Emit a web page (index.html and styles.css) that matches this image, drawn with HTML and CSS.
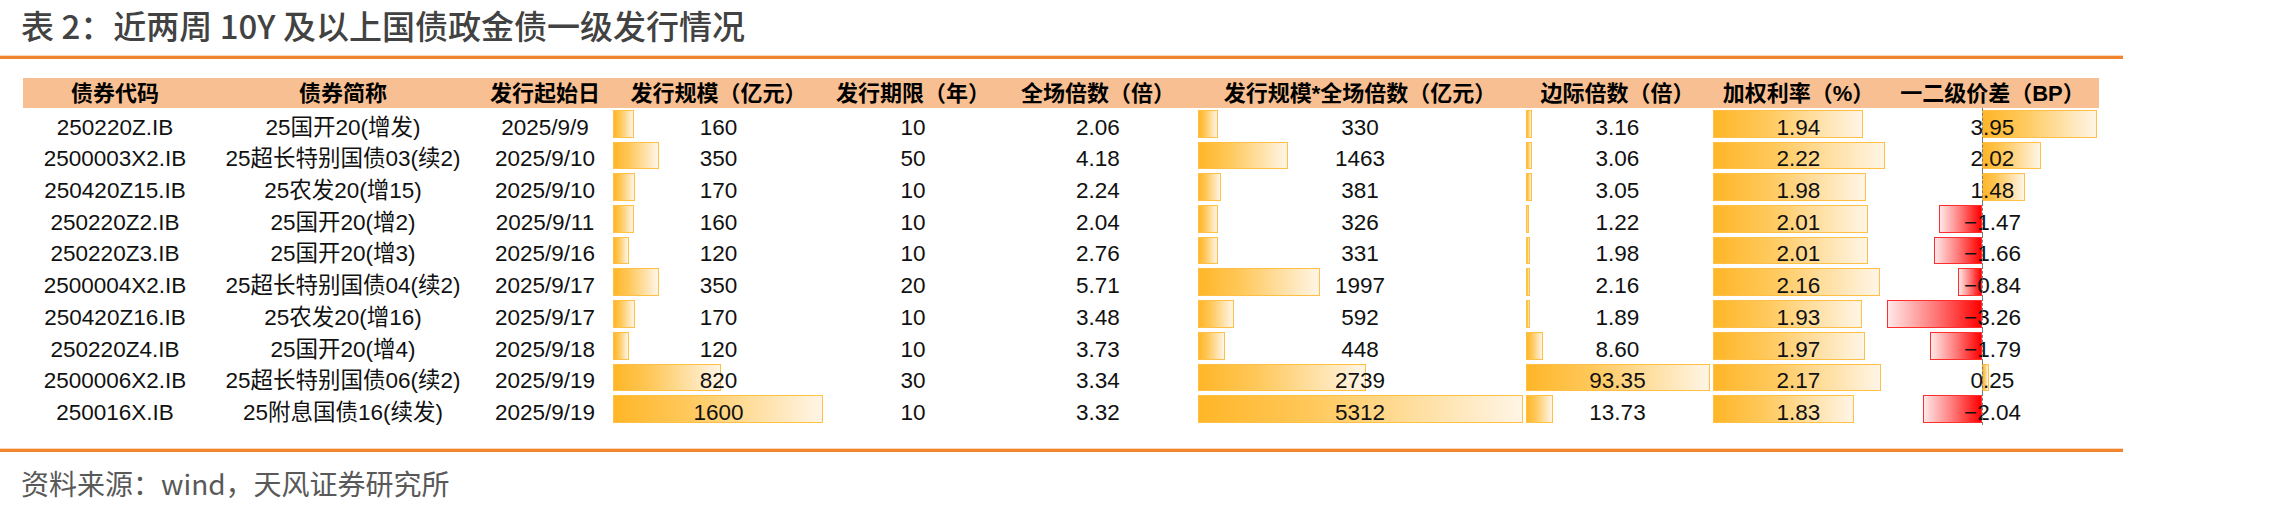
FILE: index.html
```html
<!DOCTYPE html>
<html lang="zh-CN">
<head>
<meta charset="utf-8">
<title>近两周 10Y 及以上国债政金债一级发行情况</title>
<link rel="stylesheet" href="styles.css">
</head>
<body>
<div class="page">
  <h1 class="title">表 2：近两周 10Y 及以上国债政金债一级发行情况</h1>
  <div class="rule"></div>

  <div class="table">
    <div class="row head">
      <div class="cell">债券代码</div>
      <div class="cell">债券简称</div>
      <div class="cell">发行起始日</div>
      <div class="cell">发行规模（亿元）</div>
      <div class="cell">发行期限（年）</div>
      <div class="cell">全场倍数（倍）</div>
      <div class="cell">发行规模*全场倍数（亿元）</div>
      <div class="cell">边际倍数（倍）</div>
      <div class="cell">加权利率（%）</div>
      <div class="cell">一二级价差（BP）</div>
    </div>

    <div class="row">
      <div class="cell">250220Z.IB</div>
      <div class="cell">25国开20(增发)</div>
      <div class="cell">2025/9/9</div>
      <div class="cell bar"><i class="fill" style="width:21px"></i><span>160</span></div>
      <div class="cell">10</div>
      <div class="cell">2.06</div>
      <div class="cell bar"><i class="fill" style="width:20.2px"></i><span>330</span></div>
      <div class="cell bar"><i class="fill" style="width:6.2px"></i><span>3.16</span></div>
      <div class="cell bar"><i class="fill" style="width:149.9px"></i><span>1.94</span></div>
      <div class="cell diverge"><i class="axis"></i><i class="fill pos" style="width:115px"></i><span>3.95</span></div>
    </div>

    <div class="row">
      <div class="cell">2500003X2.IB</div>
      <div class="cell">25超长特别国债03(续2)</div>
      <div class="cell">2025/9/10</div>
      <div class="cell bar"><i class="fill" style="width:45.9px"></i><span>350</span></div>
      <div class="cell">50</div>
      <div class="cell">4.18</div>
      <div class="cell bar"><i class="fill" style="width:89.5px"></i><span>1463</span></div>
      <div class="cell bar"><i class="fill" style="width:6px"></i><span>3.06</span></div>
      <div class="cell bar"><i class="fill" style="width:171.5px"></i><span>2.22</span></div>
      <div class="cell diverge"><i class="axis"></i><i class="fill pos" style="width:58.8px"></i><span>2.02</span></div>
    </div>

    <div class="row">
      <div class="cell">250420Z15.IB</div>
      <div class="cell">25农发20(增15)</div>
      <div class="cell">2025/9/10</div>
      <div class="cell bar"><i class="fill" style="width:22.3px"></i><span>170</span></div>
      <div class="cell">10</div>
      <div class="cell">2.24</div>
      <div class="cell bar"><i class="fill" style="width:23.3px"></i><span>381</span></div>
      <div class="cell bar"><i class="fill" style="width:6px"></i><span>3.05</span></div>
      <div class="cell bar"><i class="fill" style="width:153px"></i><span>1.98</span></div>
      <div class="cell diverge"><i class="axis"></i><i class="fill pos" style="width:43.1px"></i><span>1.48</span></div>
    </div>

    <div class="row">
      <div class="cell">250220Z2.IB</div>
      <div class="cell">25国开20(增2)</div>
      <div class="cell">2025/9/11</div>
      <div class="cell bar"><i class="fill" style="width:21px"></i><span>160</span></div>
      <div class="cell">10</div>
      <div class="cell">2.04</div>
      <div class="cell bar"><i class="fill" style="width:19.9px"></i><span>326</span></div>
      <div class="cell bar"><i class="fill" style="width:2.6px"></i><span>1.22</span></div>
      <div class="cell bar"><i class="fill" style="width:155.3px"></i><span>2.01</span></div>
      <div class="cell diverge"><i class="axis"></i><i class="fill neg" style="width:42.8px"></i><span>−1.47</span></div>
    </div>

    <div class="row">
      <div class="cell">250220Z3.IB</div>
      <div class="cell">25国开20(增3)</div>
      <div class="cell">2025/9/16</div>
      <div class="cell bar"><i class="fill" style="width:15.75px"></i><span>120</span></div>
      <div class="cell">10</div>
      <div class="cell">2.76</div>
      <div class="cell bar"><i class="fill" style="width:20.3px"></i><span>331</span></div>
      <div class="cell bar"><i class="fill" style="width:3.9px"></i><span>1.98</span></div>
      <div class="cell bar"><i class="fill" style="width:155.3px"></i><span>2.01</span></div>
      <div class="cell diverge"><i class="axis"></i><i class="fill neg" style="width:48.3px"></i><span>−1.66</span></div>
    </div>

    <div class="row">
      <div class="cell">2500004X2.IB</div>
      <div class="cell">25超长特别国债04(续2)</div>
      <div class="cell">2025/9/17</div>
      <div class="cell bar"><i class="fill" style="width:45.9px"></i><span>350</span></div>
      <div class="cell">20</div>
      <div class="cell">5.71</div>
      <div class="cell bar"><i class="fill" style="width:122.2px"></i><span>1997</span></div>
      <div class="cell bar"><i class="fill" style="width:4.3px"></i><span>2.16</span></div>
      <div class="cell bar"><i class="fill" style="width:166.9px"></i><span>2.16</span></div>
      <div class="cell diverge"><i class="axis"></i><i class="fill neg" style="width:24.5px"></i><span>−0.84</span></div>
    </div>

    <div class="row">
      <div class="cell">250420Z16.IB</div>
      <div class="cell">25农发20(增16)</div>
      <div class="cell">2025/9/17</div>
      <div class="cell bar"><i class="fill" style="width:22.3px"></i><span>170</span></div>
      <div class="cell">10</div>
      <div class="cell">3.48</div>
      <div class="cell bar"><i class="fill" style="width:36.2px"></i><span>592</span></div>
      <div class="cell bar"><i class="fill" style="width:3.7px"></i><span>1.89</span></div>
      <div class="cell bar"><i class="fill" style="width:149.1px"></i><span>1.93</span></div>
      <div class="cell diverge"><i class="axis"></i><i class="fill neg" style="width:94.9px"></i><span>−3.26</span></div>
    </div>

    <div class="row">
      <div class="cell">250220Z4.IB</div>
      <div class="cell">25国开20(增4)</div>
      <div class="cell">2025/9/18</div>
      <div class="cell bar"><i class="fill" style="width:15.75px"></i><span>120</span></div>
      <div class="cell">10</div>
      <div class="cell">3.73</div>
      <div class="cell bar"><i class="fill" style="width:27.4px"></i><span>448</span></div>
      <div class="cell bar"><i class="fill" style="width:17px"></i><span>8.60</span></div>
      <div class="cell bar"><i class="fill" style="width:152.2px"></i><span>1.97</span></div>
      <div class="cell diverge"><i class="axis"></i><i class="fill neg" style="width:52.1px"></i><span>−1.79</span></div>
    </div>

    <div class="row">
      <div class="cell">2500006X2.IB</div>
      <div class="cell">25超长特别国债06(续2)</div>
      <div class="cell">2025/9/19</div>
      <div class="cell bar"><i class="fill" style="width:107.6px"></i><span>820</span></div>
      <div class="cell">30</div>
      <div class="cell">3.34</div>
      <div class="cell bar"><i class="fill" style="width:167.6px"></i><span>2739</span></div>
      <div class="cell bar"><i class="fill" style="width:184px"></i><span>93.35</span></div>
      <div class="cell bar"><i class="fill" style="width:167.6px"></i><span>2.17</span></div>
      <div class="cell diverge"><i class="axis"></i><i class="fill pos" style="width:7.3px"></i><span>0.25</span></div>
    </div>

    <div class="row">
      <div class="cell">250016X.IB</div>
      <div class="cell">25附息国债16(续发)</div>
      <div class="cell">2025/9/19</div>
      <div class="cell bar"><i class="fill" style="width:210px"></i><span>1600</span></div>
      <div class="cell">10</div>
      <div class="cell">3.32</div>
      <div class="cell bar"><i class="fill" style="width:325px"></i><span>5312</span></div>
      <div class="cell bar"><i class="fill" style="width:27.1px"></i><span>13.73</span></div>
      <div class="cell bar"><i class="fill" style="width:141.4px"></i><span>1.83</span></div>
      <div class="cell diverge"><i class="axis"></i><i class="fill neg" style="width:59.4px"></i><span>−2.04</span></div>
    </div>
  </div>

  <div class="rule rule-bottom"></div>
  <p class="source">资料来源：wind，天风证券研究所</p>
</div>
</body>
</html>
```

FILE: styles.css
```css
* { box-sizing: border-box; }

html, body {
  margin: 0;
  padding: 0;
  background: #ffffff;
}

.page {
  width: 2281px;
  height: 517px;
  overflow: hidden;
}

.title {
  margin: 0;
  height: 55px;
  padding: 5px 0 0 21px;
  font-family: "Noto Sans CJK SC", sans-serif;
  font-size: 33px;
  line-height: 40px;
  font-weight: 500;
  color: #424242;
  white-space: nowrap;
}

.rule {
  width: 2123px;
  height: 4px;
  border-top: 1px solid #fbd6b9;
  background: #f0852d;
}

.table {
  margin: 19px 0 0 23px;
  width: 2076px;
  --cols: 184px 272px 132px 215px 174px 196px 328px 187px 175px 213px;
}

.row {
  display: grid;
  grid-template-columns: var(--cols);
  height: 31.7px;
  font-family: "Liberation Sans", "Noto Sans CJK SC", sans-serif;
  font-size: 22.5px;
  color: #111111;
}

.row.head {
  height: 30px;
  background: #f8c092;
  font-size: 22px;
  font-weight: 700;
  color: #000000;
}

.cell {
  display: flex;
  justify-content: center;
  align-items: flex-end;
  line-height: 23px;
  white-space: nowrap;
  padding-bottom: 1px;
}

.row.head .cell {
  align-items: center;
  padding-bottom: 0;
  padding-top: 1px;
}

.cell.bar,
.cell.diverge {
  position: relative;
}

.cell span {
  position: relative;
  z-index: 2;
}

.fill {
  position: absolute;
  top: 2px;
  bottom: 2px;
  left: 2px;
  border: 1px solid #ffc045;
  background: linear-gradient(to right, #ffb628 0%, #ffc85a 35%, #fff5e6 100%);
}

.fill.pos {
  left: 96px;
}

.fill.neg {
  left: auto;
  right: 117px;
  border-color: #ff2e2e;
  background: linear-gradient(to right, #ffe8e8 0%, #ff7a7a 50%, #ff0000 100%);
}

.axis {
  position: absolute;
  top: 0;
  bottom: 0;
  left: 96px;
  width: 0;
  border-left: 1px dashed #7a7a7a;
  z-index: 3;
}

.rule-bottom {
  margin-top: 23px;
}

.source {
  margin: 13px 0 0 0;
  padding-left: 21px;
  font-family: "Noto Sans CJK SC", sans-serif;
  font-size: 28px;
  line-height: 36px;
  color: #595959;
  white-space: nowrap;
}
```
